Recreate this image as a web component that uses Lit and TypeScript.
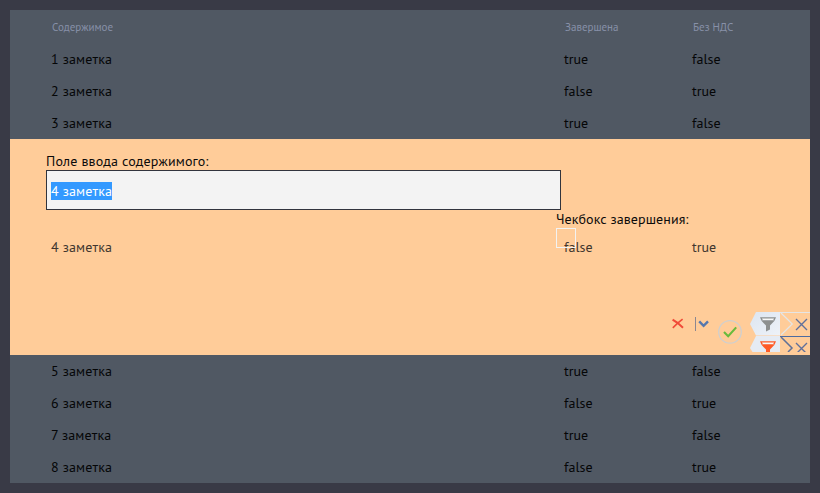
import { LitElement, html, css, svg } from "lit";
import { customElement, property } from "lit/decorators.js";

interface Note {
  title: string;
  done: boolean;
  noVat: boolean;
}

const NOTES: Note[] = Array.from({ length: 8 }, (_, i) => ({
  title: `${i + 1} заметка`,
  done: i % 2 === 0,
  noVat: i % 2 === 1,
}));

const funnel = (color: string) => svg`
  <path d="M10 5.2 H26 L24.6 8.4 H11.4 Z" fill=${color}></path>
  <path d="M12 6.4 H24 L23.2 8 H12.8 Z" fill="#f7f8f8"></path>
  <path d="M11.2 8.6 H24.8 L20 13.4 V17.6 L16 19.6 V13.4 Z" fill=${color}></path>`;

@customElement("row-tools")
export class RowTools extends LitElement {
  static styles = css`
    :host { display: flex; align-items: flex-start; height: 43px; }
    svg { display: block; flex: none; }
    .delete { margin: 6px 11px 0 0; }
    .menu { margin: 4px 9px 0 0; }
    .apply { margin: 7px 8px 0 0; }
    .filters { display: flex; flex-direction: column; width: 60px; }
  `;

  render() {
    return html`
      <svg class="delete" width="12" height="12" viewBox="0 0 12 12" fill="none" stroke="#f04a38">
        <path d="M0.6 1.6 L5.5 4.8 L11 9.8" stroke-width="2"></path>
        <path d="M10.6 1.2 L5.7 5.2 L0.8 9.8" stroke-width="1.6"></path>
      </svg>
      <svg class="menu" width="14" height="16" viewBox="0 0 14 16" fill="none">
        <path d="M0.5 1 V15" stroke="#8b8791"></path>
        <path d="M4.2 5.3 L8.6 9.8 L13 5.3" stroke="#5577ae" stroke-width="2.4"></path>
      </svg>
      <svg class="apply" width="24" height="25" viewBox="0 0 24 25" fill="none">
        <circle cx="12" cy="12.9" r="11.3" stroke="#d0cfce" stroke-width="1.3"></circle>
        <path d="M6 13 L10.2 17.2 L18.2 8.4" stroke="#68bb3c" stroke-width="2.1"></path>
      </svg>
      <div class="filters">
        <svg width="60" height="24" viewBox="0 0 60 24" fill="none">
          <defs>
            <linearGradient id="tile" x1="0" x2="1" y1="0" y2="1">
              <stop offset="0" stop-color="#dce5f1"></stop>
              <stop offset="1" stop-color="#eef2f8"></stop>
            </linearGradient>
          </defs>
          <path d="M6 0 H30 V23.5 H6 L0 12 Z" fill="url(#tile)"></path>
          ${funnel("#8d9090")}
          <path d="M30 0.5 H60 M31 1 L42.3 12 L31 23" stroke="#e5e5e5" stroke-width="1.2"></path>
          <path d="M46 7 L57 18 M57 7 L46 18" stroke="#60709b" stroke-width="1.4"></path>
        </svg>
        <svg width="60" height="16" viewBox="0 0 60 16" fill="none">
          <path d="M6 0 H30 V16 H2.5 L0 12 Z" fill="#e5ebf4"></path>
          ${funnel("#ff5a26")}
          <path d="M30 0.5 H60" stroke="#4e6ba0"></path>
          <path d="M31 1 L42 12 L38 16" stroke="#607197" stroke-width="1.5"></path>
          <path d="M46 7 L56 17 M57 7 L47 17" stroke="#60709b" stroke-width="1.4"></path>
        </svg>
      </div>
    `;
  }
}

@customElement("note-row")
export class NoteRow extends LitElement {
  @property({ attribute: false }) note!: Note;
  @property({ type: Boolean, reflect: true }) editing = false;

  static styles = css`
    :host { display: block; position: relative; height: 32px; color: #050607; }
    :host([editing]) { height: 216px; background: #ffcc99; color: #40362f; }
    .cells {
      display: grid; grid-template-columns: 513px 128px 1fr;
      align-items: center; height: 100%; padding-left: 41px; box-sizing: border-box;
    }
    .title { letter-spacing: 0.15px; }
    .edit-label { color: #0b0a0a; line-height: 18px; white-space: nowrap; }
    .content-field { position: absolute; left: 36px; top: 13px; }
    .content-field .edit-label { letter-spacing: 0.17px; }
    .input {
      display: flex; align-items: center; width: 515px; height: 40px; box-sizing: border-box;
      border: 1px solid #31343d; background: #f3f3f3; padding: 2px 0 0 4px;
    }
    .selected { background: #3399ff; color: #fff; line-height: 18px; width: 61px; white-space: nowrap; }
    .done-field { position: absolute; left: 546px; top: 71px; }
    .done-field .edit-label { letter-spacing: 0.08px; }
    .checkbox { width: 20px; height: 20px; box-sizing: border-box; border: 1px solid #f2f2f2; }
    row-tools { position: absolute; right: 0; bottom: 0; }
  `;

  render() {
    const { title, done, noVat } = this.note;
    return html`
      <div class="cells">
        <span class="title">${title}</span>
        <span>${done}</span>
        <span>${noVat}</span>
      </div>
      ${this.editing
        ? html`
            <div class="content-field">
              <div class="edit-label">Поле ввода содержимого:</div>
              <div class="input"><span class="selected title">${title}</span></div>
            </div>
            <div class="done-field">
              <div class="edit-label">Чекбокс завершения:</div>
              <div class="checkbox"></div>
            </div>
            <row-tools></row-tools>
          `
        : null}
    `;
  }
}

@customElement("app-root")
export class AppRoot extends LitElement {
  static styles = css`
    :host {
      display: block; width: 820px; height: 493px; box-sizing: border-box;
      padding: 10px; background: #393a46; overflow: hidden;
      font: 14px/18px "PT Sans", "Noto Sans", "Open Sans", sans-serif;
    }
    .table { background: #505863; height: 473px; }
    .head {
      display: grid; grid-template-columns: 513px 128px 1fr; align-items: center;
      height: 33px; padding: 0 0 0 42px; box-sizing: border-box;
      font-size: 11px; color: #8790a8;
    }
  `;

  render() {
    return html`
      <div class="table">
        <div class="head">
          <span>Содержимое</span><span>Завершена</span><span>Без НДС</span>
        </div>
        ${NOTES.map((note, i) => html`<note-row .note=${note} ?editing=${i === 3}></note-row>`)}
      </div>
    `;
  }
}
